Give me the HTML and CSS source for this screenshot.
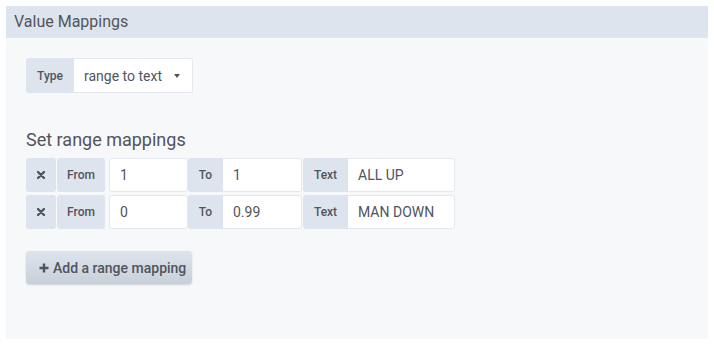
FILE: index.html
```html
<!DOCTYPE html>
<html lang="en">
    <head>
        <meta charset="UTF-8">
        <title>Value Mappings</title>
        <link rel="stylesheet" href="styles.css">
    </head>
    <body>
        <section class="panel">
            <header class="panelHeader">Value Mappings</header>
            <div class="panelBody">
                <div class="formRow">
                    <span class="label typeLabel">Type</span>
                    <div class="select">
                        <span>range to text</span>
                        <span class="caret"></span>
                    </div>
                </div>

                <h3 class="sectionTitle">Set range mappings</h3>

                <div class="formRow mapping">
                    <span class="label removeBtn">
                        <svg width="8" height="8" viewBox="0 0 8 8"><path d="M1 1 L7 7 M7 1 L1 7" stroke="#52545c" stroke-width="2.4" stroke-linecap="round"/></svg>
                    </span>
                    <span class="label fromLabel">From</span>
                    <input type="text" class="input fromInput" value="1">
                    <span class="label toLabel">To</span>
                    <input type="text" class="input toInput" value="1">
                    <span class="label textLabel">Text</span>
                    <input type="text" class="input textInput" value="ALL UP">
                </div>
                <div class="formRow mapping">
                    <span class="label removeBtn">
                        <svg width="8" height="8" viewBox="0 0 8 8"><path d="M1 1 L7 7 M7 1 L1 7" stroke="#52545c" stroke-width="2.4" stroke-linecap="round"/></svg>
                    </span>
                    <span class="label fromLabel">From</span>
                    <input type="text" class="input fromInput" value="0">
                    <span class="label toLabel">To</span>
                    <input type="text" class="input toInput" value="0.99">
                    <span class="label textLabel">Text</span>
                    <input type="text" class="input textInput" value="MAN DOWN">
                </div>

                <button class="addBtn">
                    <svg width="10" height="10" viewBox="0 0 10 10"><path d="M5 0.5 V9.5 M0.5 5 H9.5" stroke="#52545c" stroke-width="2.4"/></svg>
                    <span>Add a range mapping</span>
                </button>
            </div>
        </section>
    </body>
</html>
```

FILE: styles.css
```css
body {
    margin: 0px;
    padding: 6px;
    background-color: #ffffff;
    font-family: Roboto, "Helvetica Neue", Arial, sans-serif;
    color: #52545c;
}

.panel {
    width: 702px;
    height: 333px;
    background-color: #f7f8fa;
    border-radius: 0 0 3px 3px;
}

.panelHeader {
    height: 32px;
    line-height: 32px;
    padding-left: 8px;
    background-color: #dde4ed;
    font-size: 16px;
}

.panelBody {
    padding: 20px 20px;
}

.formRow {
    display: flex;
    height: 35px;
}

.label {
    display: flex;
    align-items: center;
    justify-content: center;
    box-sizing: border-box;
    background-color: #dde4ed;
    font-size: 12px;
    font-weight: 500;
    color: #52545c;
    border-radius: 3px;
}

.typeLabel {
    width: 48px;
    border-radius: 3px 0 0 3px;
}

.select {
    display: flex;
    align-items: center;
    justify-content: space-between;
    box-sizing: border-box;
    width: 119px;
    padding: 0 10px;
    background-color: #ffffff;
    border: 1px solid #e3e7ee;
    border-left: none;
    border-radius: 0 3px 3px 0;
    font-size: 14px;
}

.caret {
    width: 0;
    height: 0;
    margin-right: 2px;
    border-left: 3.5px solid transparent;
    border-right: 3.5px solid transparent;
    border-top: 4px solid #52545c;
}

.sectionTitle {
    margin: 35px 0 6px 0;
    font-size: 18px;
    font-weight: 400;
    line-height: 24px;
    color: #52545c;
}

.mapping {
    height: 34px;
    margin-bottom: 3px;
}

.removeBtn {
    width: 30px;
    margin-right: 1px;
}

.fromLabel {
    width: 48px;
    margin-right: 4px;
}

.toLabel {
    width: 35px;
    border-radius: 3px 0 0 3px;
}

.textLabel {
    width: 45px;
    border-radius: 3px 0 0 3px;
}

.input {
    box-sizing: border-box;
    height: 34px;
    padding: 0 10px;
    margin: 0;
    background-color: #ffffff;
    border: 1px solid #e3e7ee;
    border-radius: 3px;
    font-family: Roboto, "Helvetica Neue", Arial, sans-serif;
    font-size: 14px;
    color: #52545c;
    outline: none;
}

.fromInput {
    width: 79px;
}

.toInput {
    width: 79px;
    border-left: none;
    border-radius: 0 3px 3px 0;
    margin-right: 1px;
}

.textInput {
    width: 107px;
    border-left: none;
    border-radius: 0 3px 3px 0;
}

.addBtn {
    display: flex;
    align-items: center;
    gap: 4px;
    margin-top: 22px;
    width: 166px;
    height: 33px;
    padding: 0 13px;
    border: none;
    border-radius: 3px;
    background: linear-gradient(to bottom, #dde4ed, #c7d0d9);
    box-shadow: 0 1px 2px rgba(0, 0, 0, 0.15);
    font-family: Roboto, "Helvetica Neue", Arial, sans-serif;
    font-size: 14px;
    font-weight: 500;
    color: #52545c;
    white-space: nowrap;
}

.addBtn svg {
    flex-shrink: 0;
}
```
